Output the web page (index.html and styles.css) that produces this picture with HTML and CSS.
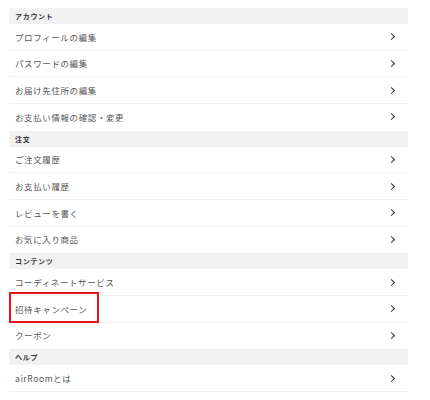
FILE: index.html
```html
<!DOCTYPE html>
<html lang="ja">
<head>
    <meta charset="UTF-8">
    <meta name="viewport" content="width=device-width, initial-scale=1.0">
    <title>マイページ</title>
    <link rel="stylesheet" href="styles.css">
</head>
<body>
    <div class="menu">
        <div class="menu-head">アカウント</div>
        <a class="menu-item" href="#"><span>プロフィールの編集</span><i class="chev"></i></a>
        <a class="menu-item" href="#"><span>パスワードの編集</span><i class="chev"></i></a>
        <a class="menu-item" href="#"><span>お届け先住所の編集</span><i class="chev"></i></a>
        <a class="menu-item last" href="#"><span>お支払い情報の確認・変更</span><i class="chev"></i></a>

        <div class="menu-head">注文</div>
        <a class="menu-item" href="#"><span>ご注文履歴</span><i class="chev"></i></a>
        <a class="menu-item" href="#"><span>お支払い履歴</span><i class="chev"></i></a>
        <a class="menu-item" href="#"><span>レビューを書く</span><i class="chev"></i></a>
        <a class="menu-item last" href="#"><span>お気に入り商品</span><i class="chev"></i></a>

        <div class="menu-head">コンテンツ</div>
        <a class="menu-item" href="#"><span>コーディネートサービス</span><i class="chev"></i></a>
        <a class="menu-item marked" href="#"><span>招待キャンペーン</span><i class="chev"></i></a>
        <a class="menu-item last" href="#"><span>クーポン</span><i class="chev"></i></a>

        <div class="menu-head">ヘルプ</div>
        <a class="menu-item" href="#"><span>airRoomとは</span><i class="chev"></i></a>
    </div>
</body>
</html>
```

FILE: styles.css
```css
body {
    margin: 8px 22px 0 9px;
    background: #fff;
    font-family: "Noto Sans CJK JP", "Noto Sans", sans-serif;
    color: #555;
}

.menu {
    display: flex;
    flex-direction: column;
}

/* Section titles */
.menu-head {
    height: 16px;
    line-height: 16px;
    padding-left: 6px;
    background-color: #f2f2f2;
    color: #333;
    font-size: 7px;
    font-weight: bold;
    letter-spacing: 0.7px;
}

/* Rows */
.menu-item {
    display: flex;
    align-items: center;
    justify-content: space-between;
    height: 25.67px;
    padding: 0 14px 0 6px;
    border-bottom: 1px solid #f1f1f1;
    color: #555;
    text-decoration: none;
    font-size: 8.5px;
    letter-spacing: 0.6px;
    position: relative;
}

.menu-item.last {
    border-bottom-color: #fff;
}

.chev {
    width: 4px;
    height: 4px;
    border-right: 1.6px solid #333;
    border-bottom: 1.6px solid #333;
    transform: rotate(-45deg);
}

/* Red highlight box */
.menu-item.marked::after {
    content: '';
    position: absolute;
    left: 0;
    top: -4px;
    width: 86px;
    height: 27px;
    border: 2px solid #e8141c;
}
```
